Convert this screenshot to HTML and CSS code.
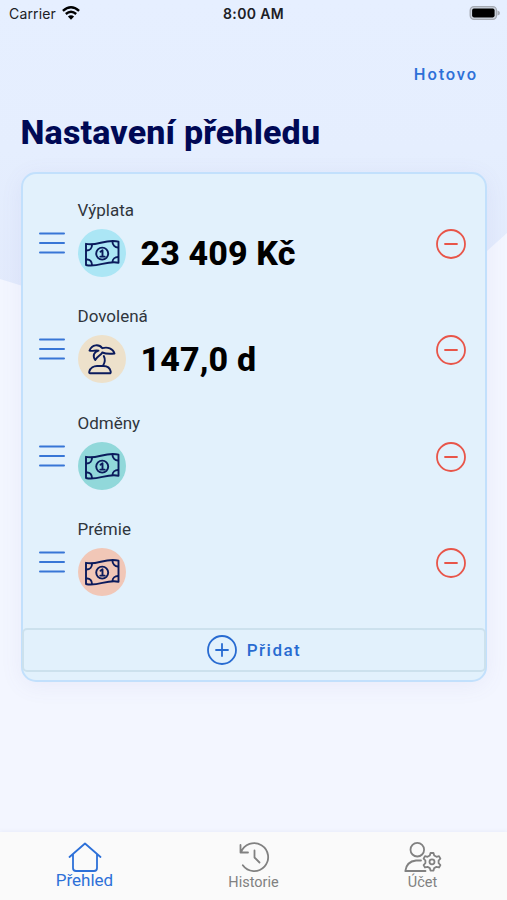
FILE: index.html
```html
<!DOCTYPE html>
<html lang="cs">
<head>
<meta charset="utf-8">
<title>Nastavení přehledu</title>
<link rel="stylesheet" href="styles.css">
</head>
<body>
<svg class="defs" width="0" height="0" aria-hidden="true">
  <symbol id="money" viewBox="0 0 48 48">
    <path d="M8 14.800C18.500 17.500 28 9.500 40.500 12.700V33.800C29.500 31 19 39 8 36Z"/>
    <circle cx="24.200" cy="24.600" r="6"/>
    <path d="M22.500 22.700L24.500 21.300V27.400M22.300 27.600H26.700"/>
    <path d="M8.500 21.500C12 21.500 14 19 14 16M8.500 30.500C12 30 14 33 14 36M40 18.500C37 18.500 34.500 16 34.500 13M40 28C37 28 34.500 30 34.500 33"/>
  </symbol>
  <symbol id="palm" viewBox="0 0 48 48">
    <path d="M12.200 38.300Q10.800 38.300 11.300 36.500C12.300 32.800 16 31 19 31H25.500C29 31 32 33.200 32.700 36.500Q33 38.300 31.500 38.300Z"/>
    <path d="M25.800 21C27.300 24 27 27.500 25 30.800"/>
    <path d="M11.500 15.500C14 9.300 21 8.800 24.300 13.200C29.500 11.500 35 13.500 36.500 18.500C32.500 19 27.500 18.800 24.200 17.500C23.500 20 19.500 21 17.200 25C14.200 20.500 16 17 20.500 15.700C17.500 14.500 15 16.800 11.500 15.500Z"/>
  </symbol>
  <symbol id="minus" viewBox="0 0 30 30"><circle cx="15" cy="15" r="14"/><path d="M9 15H21"/></symbol>
  <symbol id="plus" viewBox="0 0 30 30"><circle cx="15" cy="15" r="14"/><path d="M9 15H21M15 9V21"/></symbol>
  <symbol id="menu" viewBox="0 0 26 22"><path d="M1 1.500H25M1 11H25M1 20.500H25"/></symbol>
</svg>
<div class="screen">
  <svg class="backdrop" width="507" height="320" viewBox="0 0 507 320" aria-hidden="true">
    <defs><linearGradient id="sky" x1="0" y1="0" x2="0" y2="1"><stop offset="0" stop-color="#e6efff"/><stop offset=".5" stop-color="#e5eefe"/><stop offset="1" stop-color="#e2eafc"/></linearGradient></defs>
    <path fill="url(#sky)" d="M0 0H507V233L487 251Q440 300 370 300H80Q40 292 0 279Z"/>
  </svg>
  <header class="status">
    <div class="carrier"><span>Carrier</span>
      <svg width="18" height="14" viewBox="0 0 18 14"><g fill="none" stroke="#000" stroke-width="2.400"><path d="M.9 4.800Q9 -2.300 17.100 4.800"/><path d="M3.800 8Q9 3.600 14.200 8"/></g><path d="M9 13.700L5.900 10.500Q9 7.900 12.100 10.500Z"/></svg>
    </div>
    <time class="clock">8:00 AM</time>
    <svg class="battery" width="31" height="14" viewBox="0 0 31 14"><rect x="1.200" y=".7" width="26.300" height="12.600" rx="3.800" fill="#ced4df" stroke="#a5aab3" stroke-width="1.300"/><rect x="3.100" y="2.600" width="22.500" height="8.800" rx="1.800"/><path fill="#a5aab3" d="M28.500 4.500Q31 5 31 7T28.500 9.500Z"/></svg>
  </header>
  <nav class="actions"><a class="done">Hotovo</a></nav>
  <h1 class="title">Nastavení přehledu</h1>
  <main class="card">
    <section class="row">
      <svg class="handle"><use href="#menu"/></svg>
      <div class="item"><div class="label">Výplata</div><div class="line"><span class="badge sky"><svg><use href="#money"/></svg></span><strong class="value">23 409 Kč</strong></div></div>
      <svg class="remove"><use href="#minus"/></svg>
    </section>
    <section class="row">
      <svg class="handle"><use href="#menu"/></svg>
      <div class="item"><div class="label">Dovolená</div><div class="line"><span class="badge sand"><svg><use href="#palm"/></svg></span><strong class="value">147,0 d</strong></div></div>
      <svg class="remove"><use href="#minus"/></svg>
    </section>
    <section class="row">
      <svg class="handle"><use href="#menu"/></svg>
      <div class="item"><div class="label">Odměny</div><div class="line"><span class="badge teal"><svg><use href="#money"/></svg></span></div></div>
      <svg class="remove"><use href="#minus"/></svg>
    </section>
    <section class="row">
      <svg class="handle"><use href="#menu"/></svg>
      <div class="item"><div class="label">Prémie</div><div class="line"><span class="badge peach"><svg><use href="#money"/></svg></span></div></div>
      <svg class="remove"><use href="#minus"/></svg>
    </section>
    <div class="add"><svg><use href="#plus"/></svg><span>Přidat</span></div>
  </main>
  <footer class="tabs">
    <a class="tab active">
      <svg width="38" height="32" viewBox="0 0 38 32"><path d="M3.500 16L19 2.500L34.500 16M7 13.500V27Q7 30 10 30H28Q31 30 31 27V13.500"/></svg>
      <span>Přehled</span>
    </a>
    <a class="tab">
      <svg width="38" height="32" viewBox="0 0 38 32"><path d="M5.500 4V11.500H13M6 11.300A14 14 0 1 1 7.800 24.300M19.500 9.500V16.500L24.500 21.500"/></svg>
      <span>Historie</span>
    </a>
    <a class="tab">
      <svg width="38" height="32" viewBox="1 0 38 32"><circle cx="14.300" cy="8.700" r="6.800"/><path d="M18 19.500H13Q3.500 20.500 2.300 30H22.500"/><circle cx="29" cy="20.800" r="2.500"/><path d="M26.800 14.500L27.500 12H30.500L31.200 14.500L33.500 15.800L36 15.100L37.400 17.600L35.600 19.500V22.100L37.400 24L36 26.500L33.500 25.800L31.200 27.100L30.500 29.600H27.500L26.800 27.100L24.500 25.800L22 26.500L20.600 24L22.400 22.100V19.500L20.600 17.600L22 15.100L24.500 15.800Z"/></svg>
      <span>Účet</span>
    </a>
  </footer>
</div>
</body>
</html>
```
FILE: styles.css
```css
* { box-sizing: border-box; }
body { margin: 0; font-family: Roboto, sans-serif; }
.defs { position: absolute; }
.screen { position: relative; display: flex; flex-direction: column; width: 507px; height: 900px; overflow: hidden; background: #f3f6ff; }
.backdrop { position: absolute; top: 0; left: 0; }
.screen > :not(.backdrop) { position: relative; }
svg { display: block; flex: none; overflow: visible; }
.status { display: grid; grid-template-columns: 1fr auto 1fr; align-items: center; height: 28px; padding: 0 7px 2px 9px; font-family: Inter, sans-serif; font-size: 14px; color: #1c2025; }
.carrier { display: flex; align-items: center; gap: 7px; letter-spacing: .15px; }
.carrier svg { margin-left: -1px; }
.clock { margin-right: 2px; font-weight: 600; letter-spacing: .35px; }
.battery { justify-self: end; }
.actions { display: flex; justify-content: flex-end; height: 72px; padding: 36px 28px 0 0; }
.done { font-size: 16.500px; line-height: 22px; font-weight: 500; letter-spacing: 1.850px; margin-right: 1px; color: #2d70d8; }
.title { height: 72px; margin: 0; padding: 12px 0 0 20.500px; font-size: 34px; line-height: 40px; font-weight: 800; letter-spacing: .17px; color: #000955; white-space: nowrap; }
.card { height: 510px; margin: 0 20px 0 21px; padding-top: 26px; border: 2px solid #c2e0fc; border-radius: 15px; background: #e2f1fc; box-shadow: 0 4px 22px rgba(110, 100, 180, .08); }
.row { display: flex; height: 106.330px; padding: 0 19px 0 16px; }
.handle { width: 26px; height: 22px; margin-top: 32px; fill: none; stroke: #3876d6; stroke-width: 2; stroke-linecap: round; }
.item { flex: 1; margin-left: 12.500px; }
.label { height: 29px; font-size: 17px; line-height: 20px; color: #30363c; }
.line { display: flex; align-items: center; gap: 15px; }
.badge { width: 48px; height: 48px; border-radius: 50%; }
.badge svg { width: 48px; height: 48px; fill: none; stroke: #0b1b5c; stroke-width: 1.900; stroke-linejoin: round; stroke-linecap: round; }
.sky { background: #abe6f5; }
.sand { background: #ede1cb; }
.teal { background: #91d8da; }
.peach { background: #f1c7b7; }
.value { padding-top: 1px; font-size: 34px; line-height: 47px; font-weight: 800; letter-spacing: .12px; color: #000; }
.remove { width: 30px; height: 30px; margin-top: 29px; fill: none; stroke: #e85549; stroke-width: 1.800; stroke-linecap: round; }
.add { display: flex; align-items: center; justify-content: center; gap: 10px; height: 44px; margin: 3px -1px 0; border: 2px solid #cce1ed; border-radius: 5px; font-size: 17px; font-weight: 500; letter-spacing: 1.500px; color: #286bd1; }
.add svg { width: 30px; height: 30px; fill: none; stroke: currentColor; stroke-width: 1.800; stroke-linecap: round; }
.tabs { display: grid; grid-template-columns: repeat(3, 1fr); height: 68px; margin-top: auto; background: #fafafa; box-shadow: 0 -1px 4px rgba(80, 90, 150, .06); }
.tab { display: flex; flex-direction: column; align-items: center; padding-top: 9px; font-size: 14.500px; line-height: 19px; color: #818181; }
.tab svg { fill: none; stroke: currentColor; stroke-width: 1.800; stroke-linejoin: round; stroke-linecap: round; }
.tab.active { font-size: 17px; line-height: 14px; color: #2d70d8; }
```
